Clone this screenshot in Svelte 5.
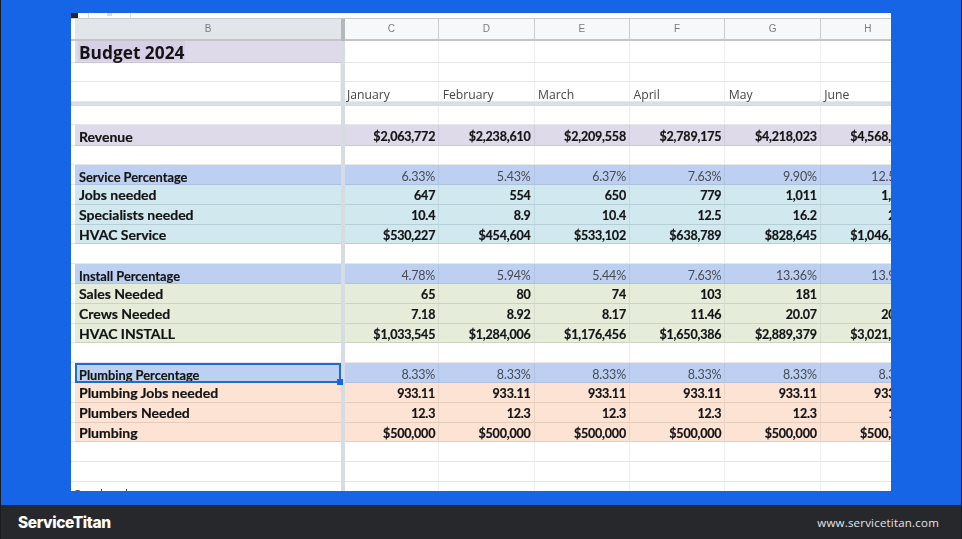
<script>
  const cols = ['C', 'D', 'E', 'F', 'G', 'H'];
  const months = ['January', 'February', 'March', 'April', 'May', 'June'];
  const blank = ['', '', '', '', '', ''];
  const rows = [
    { kind: 'blank h19', label: '', v: blank },
    { kind: 'purple h21 strong', label: 'Revenue', v: ['$2,063,772', '$2,238,610', '$2,209,558', '$2,789,175', '$4,218,023', '$4,568,415'] },
    { kind: 'blank h19', label: '', v: blank },
    { kind: 'blue pct', label: 'Service Percentage', v: ['6.33%', '5.43%', '6.37%', '7.63%', '9.90%', '12.50%'] },
    { kind: 'teal strong', label: 'Jobs needed', v: ['647', '554', '650', '779', '1,011', '1,278'] },
    { kind: 'teal strong', label: 'Specialists needed', v: ['10.4', '8.9', '10.4', '12.5', '16.2', '20.5'] },
    { kind: 'teal strong', label: 'HVAC Service', v: ['$530,227', '$454,604', '$533,102', '$638,789', '$828,645', '$1,046,269'] },
    { kind: 'blank', label: '', v: blank },
    { kind: 'blue pct', label: 'Install Percentage', v: ['4.78%', '5.94%', '5.44%', '7.63%', '13.36%', '13.91%'] },
    { kind: 'green strong', label: 'Sales Needed', v: ['65', '80', '74', '103', '181', '190'] },
    { kind: 'green strong', label: 'Crews Needed', v: ['7.18', '8.92', '8.17', '11.46', '20.07', '20.98'] },
    { kind: 'green strong', label: 'HVAC INSTALL', v: ['$1,033,545', '$1,284,006', '$1,176,456', '$1,650,386', '$2,889,379', '$3,021,456'] },
    { kind: 'blank', label: '', v: blank },
    { kind: 'blue pct selected', label: 'Plumbing Percentage', v: ['8.33%', '8.33%', '8.33%', '8.33%', '8.33%', '8.33%'] },
    { kind: 'peach strong', label: 'Plumbing Jobs needed', v: ['933.11', '933.11', '933.11', '933.11', '933.11', '933.11'] },
    { kind: 'peach strong', label: 'Plumbers Needed', v: ['12.3', '12.3', '12.3', '12.3', '12.3', '12.3'] },
    { kind: 'peach strong', label: 'Plumbing', v: ['$500,000', '$500,000', '$500,000', '$500,000', '$500,000', '$500,000'] },
    { kind: 'blank', label: '', v: blank },
    { kind: 'blank', label: '', v: blank }
  ];
</script>

<div class="page">
  <main class="stage">
    <section class="sheet">
      <div class="strip">
        <span class="corner"></span>
        <span class="tab"><i></i></span>
      </div>

      <div class="row head">
        <span class="gut"></span>
        <span class="cell sel">B</span>
        <span class="bar"></span>
        {#each cols as c}<span class="cell">{c}</span>{/each}
      </div>

      <div class="row purple title">
        <span class="gut"></span>
        <span class="cell lab"><mark>Budget 2024</mark></span>
        <span class="bar"></span>
        {#each cols as c}<span class="cell plain"></span>{/each}
      </div>

      <div class="row blank h195">
        <span class="gut"></span>
        <span class="cell"></span>
        <span class="bar"></span>
        {#each cols as c}<span class="cell"></span>{/each}
      </div>

      <div class="row blank monthrow">
        <span class="gut"></span>
        <span class="cell"></span>
        <span class="bar"></span>
        {#each months as m}<span class="cell month">{m}</span>{/each}
      </div>

      <div class="rule"></div>

      {#each rows as r}
        <div class="row {r.kind}">
          <span class="gut"></span>
          <span class="cell lab">{r.label}</span>
          <span class="bar"></span>
          {#each r.v as val}<span class="cell num">{val}</span>{/each}
          {#if r.kind.includes('selected')}<span class="handle"></span>{/if}
        </div>
      {/each}

      <div class="row blank">
        <span class="gut"></span>
        <span class="cell over">Overhead</span>
        <span class="bar"></span>
        {#each cols as c}<span class="cell"></span>{/each}
      </div>
    </section>
  </main>

  <footer class="foot">
    <span class="logo">ServiceTitan</span>
    <span class="url">www.servicetitan.com</span>
  </footer>
</div>

<style>
  :global(body) {
    margin: 0;
    background: #1b1d22;
  }

  .page {
    width: 962px;
    height: 539px;
    display: flex;
    flex-direction: column;
    padding: 0 1px;
    box-sizing: border-box;
    overflow: hidden;
  }

  .stage {
    height: 505px;
    box-sizing: border-box;
    padding: 13px 70px 14px;
    background: #1565e6;
  }

  .sheet {
    width: 820px;
    height: 478px;
    overflow: hidden;
    background: #fff;
    font-family: Lato, "Liberation Sans", sans-serif;
    color: #141416;
    filter: blur(0.3px);
  }

  .strip {
    height: 5px;
    position: relative;
    display: flex;
  }

  .corner {
    width: 7px;
    height: 5px;
    background: #25262a;
  }

  .tab {
    width: 43px;
    height: 5px;
    margin-left: 10px;
    box-sizing: border-box;
    border-left: 1px solid #dcdde0;
    border-right: 1px solid #dcdde0;
    display: flex;
    justify-content: center;
  }

  .tab i {
    width: 5px;
    height: 3px;
    background: #d5dae2;
  }

  .row {
    position: relative;
    display: grid;
    grid-template-columns: 4px 266px 3.5px 94.7px repeat(5, 95.4px);
    grid-template-rows: 100%;
    height: 19.8px;
    width: 1000px;
  }

  .h19 { height: 19.2px; }
  .h21 { height: 20.8px; }
  .h195 { height: 19.5px; }
  .monthrow { height: 20px; }

  .gut {
    border-bottom: 1px solid #e8e9ea;
  }

  .cell {
    display: block;
    box-sizing: border-box;
    min-width: 0;
    padding: 2.5px 3px 0;
    white-space: nowrap;
    border-right: 1px solid rgba(60, 70, 90, 0.09);
    border-bottom: 1px solid #e6e7e9;
    font-size: 12.5px;
    line-height: 18px;
    letter-spacing: -0.2px;
  }

  .bar {
    background: #d7dbe3;
  }

  .rule {
    height: 4px;
    width: 100%;
    background: #d9dde5;
  }

  .head {
    height: 23px;
    border-top: 1px solid #c9cacc;
    box-sizing: border-box;
  }

  .head .gut {
    background: #fff;
    border-bottom: 2px solid #c4c5c8;
  }

  .head .cell {
    background: #f6f8f9;
    border-bottom: 2px solid #c4c5c8;
    border-right: 1px solid #c9ccd0;
    padding-top: 0;
    text-align: center;
    font-family: "Liberation Sans", Arial, sans-serif;
    font-size: 10px;
    line-height: 20px;
    letter-spacing: 0;
    color: #7a7c80;
  }

  .head .sel {
    background: #e2e5e9;
    border-right: 0;
  }

  .head .bar {
    background: #b4b7bc;
  }

  .title {
    height: 21.5px;
  }

  .title .lab {
    background: #dfdae9;
    padding: 0 0 0 3px;
    border-bottom: 1px solid #c9c5d4;
    border-right: 0;
    font-family: "Open Sans", Lato, sans-serif;
    font-weight: 700;
    font-size: 17.3px;
    line-height: 24px;
    letter-spacing: 0;
    color: #141416;
  }

  .title mark {
    display: block;
    width: fit-content;
    height: 20px;
    padding: 0 1px;
    background: #d7cfe6;
    color: inherit;
  }

  .title .plain {
    background: #fff;
  }

  .month {
    padding: 3px 3px 0 3.5px;
    line-height: 19px;
    letter-spacing: 0;
    color: #454649;
    font-family: "Open Sans", Lato, sans-serif;
    font-size: 12.2px;
  }

  .month:nth-child(4) {
    padding-left: 2.5px;
  }

  .num {
    text-align: right;
  }

  .lab {
    padding-left: 4px;
    padding-top: 1.5px;
    border-right: 0;
    letter-spacing: 0;
  }

  .h21 .lab {
    padding-top: 3px;
  }

  .h21 .num {
    padding-top: 3px;
  }

  .strong .cell {
    font-weight: 700;
    -webkit-text-stroke: 0.2px currentColor;
  }

  .strong .lab {
    font-size: 14px;
  }

  .pct .lab {
    font-weight: 700;
    font-size: 12.8px;
    padding-top: 2.5px;
    -webkit-text-stroke: 0.15px currentColor;
  }

  .pct .num {
    color: #484a52;
    font-size: 12.5px;
    padding-top: 3px;
  }

  .purple .cell { background: #dfdae9; border-bottom-color: #c9c5d4; }
  .purple.title .cell.plain { background: #fff; border-bottom-color: #e6e7e9; }
  .blue .cell { background: #bdd0f1; border-bottom-color: #aec1de; }
  .teal .cell { background: #d0e8ee; border-bottom-color: #b6ced6; }
  .green .cell { background: #e6ecda; border-bottom-color: #ccd3bf; }
  .peach .cell { background: #fce3d4; border-bottom-color: #e5ccbd; }

  .selected .lab {
    outline: 2px solid #1c6dcc;
    outline-offset: -2px;
    border-right: 0;
  }

  .handle {
    position: absolute;
    left: 266px;
    top: 16px;
    width: 6px;
    height: 6px;
    background: #1565e6;
    border: 0;
    z-index: 2;
  }

  .over {
    padding: 3px 0 0;
    margin-left: -2px;
    overflow: visible;
    font-family: "Open Sans", Lato, sans-serif;
    font-size: 12px;
    line-height: 20px;
    letter-spacing: 0;
    color: #454649;
    border-right: 0;
  }

  .foot {
    flex: 1;
    display: flex;
    align-items: center;
    justify-content: space-between;
    padding: 0 22px 0 17px;
    background: #27282b;
  }

  .logo {
    font-family: Inter, "Liberation Sans", sans-serif;
    font-weight: 800;
    font-size: 15.5px;
    letter-spacing: -0.4px;
    color: #fff;
  }

  .url {
    font-family: "Open Sans", "Noto Sans", sans-serif;
    font-size: 11.5px;
    letter-spacing: 0.2px;
    color: #e2e6ec;
  }
</style>
